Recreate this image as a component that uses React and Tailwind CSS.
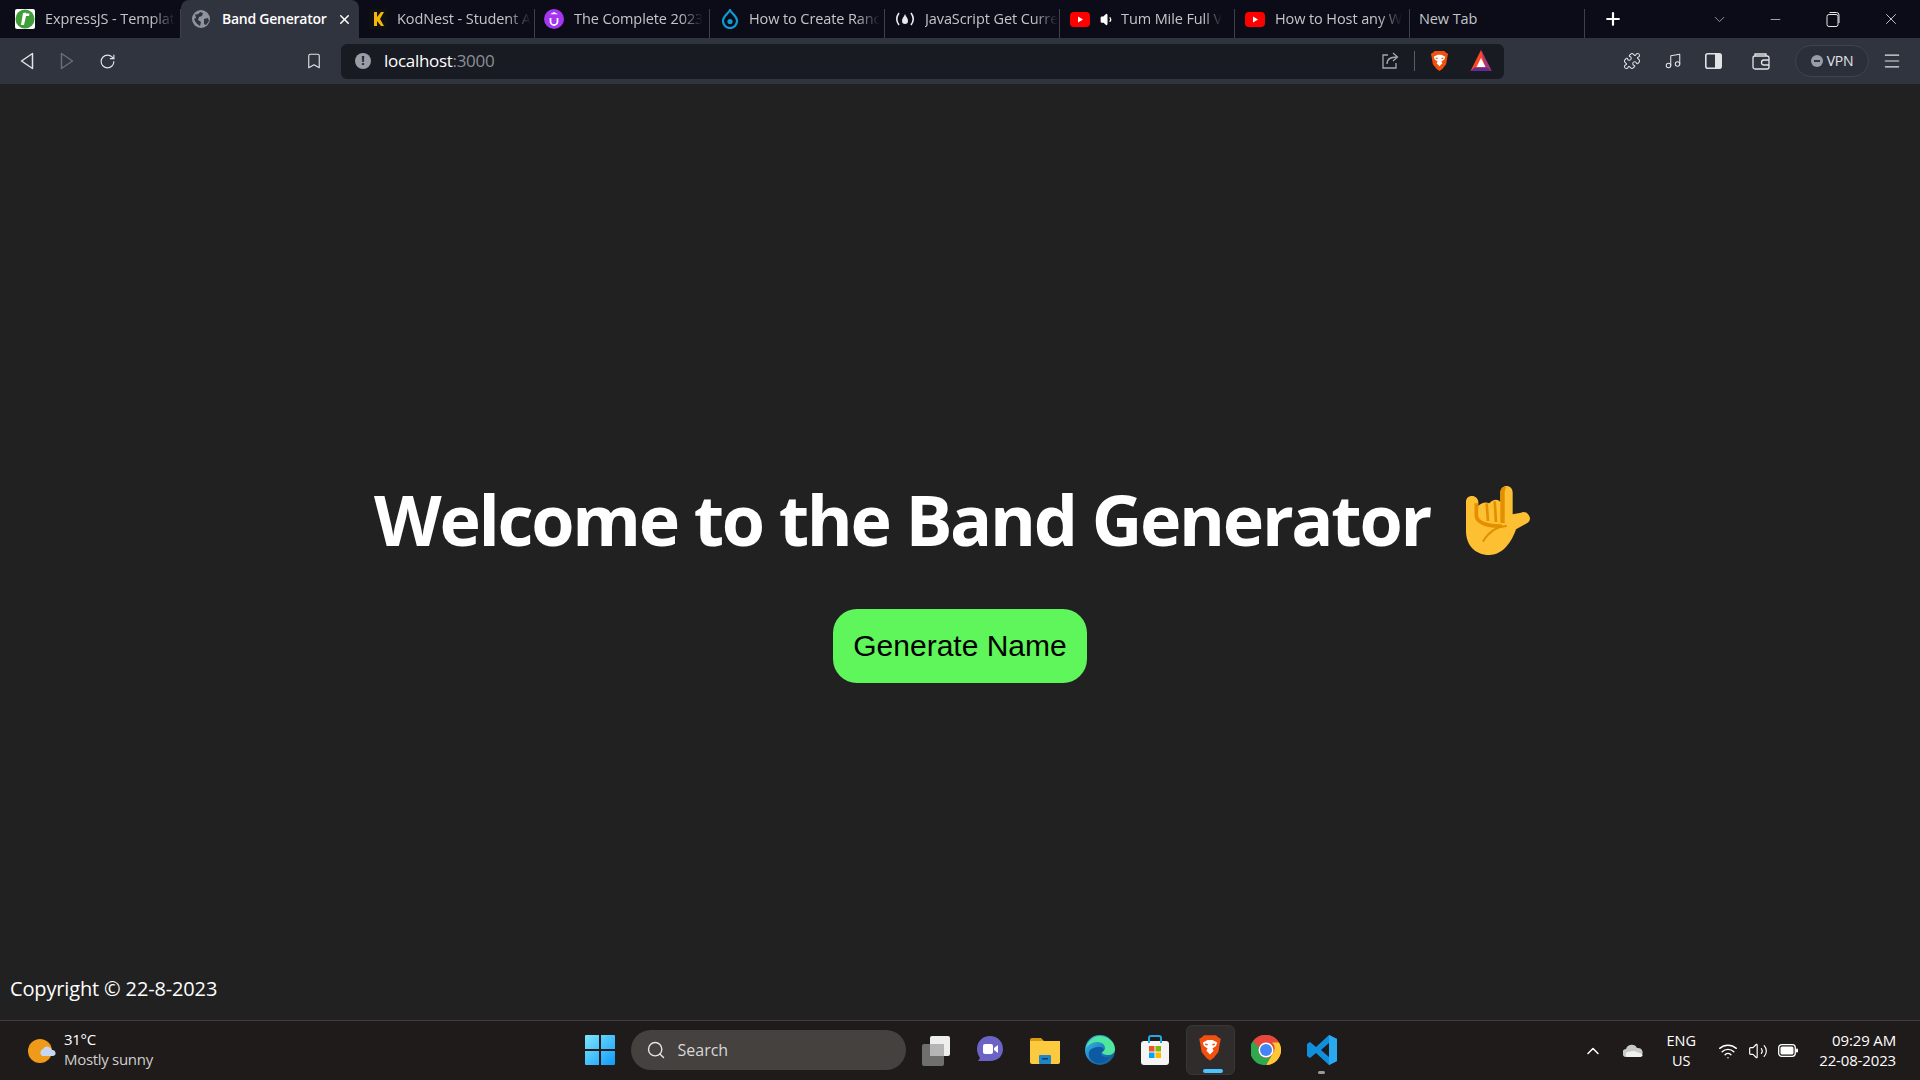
import React from "react";
import { Plus, ChevronDown, Minus, X, RotateCw, Bookmark, Puzzle, Music, Menu, ChevronUp, Search, Wifi, Volume2, Volume1 } from "lucide-react";

const ui = { fontFamily: '"Open Sans", "Noto Sans", sans-serif' };

const Green = () => (
  <svg width="20" height="20" viewBox="0 0 20 20"><rect width="20" height="20" rx="2" fill="#fff" /><circle cx="10" cy="10" r="9.5" fill="#3f9e3a" /><path d="M8 4l-2 12h3l2-9h3l.5-2.4H11l.2-1z" fill="#fff" /></svg>
);
const KodNest = () => (
  <svg width="18" height="20" viewBox="0 0 18 20"><rect width="18" height="20" fill="#111" /><path d="M5 3h3v5l4-5h3l-4 7 4 7h-3l-4-5v5H5z" fill="#f5b50a" /></svg>
);
const Udemy = () => (
  <svg width="20" height="20" viewBox="0 0 20 20"><circle cx="10" cy="10" r="10" fill="#a435f0" /><path d="M6.5 9v3.5a3.5 3.5 0 0 0 7 0V9" fill="none" stroke="#fff" strokeWidth="1.8" /><path d="M10 3l4 2.2H6z" fill="#fff" /></svg>
);
const Drupal = () => (
  <svg width="18" height="20" viewBox="0 0 18 20"><path d="M9 1c1 3 7 6 7 11a7 7 0 0 1-14 0C2 7 8 4 9 1z" fill="none" stroke="#0f9ad6" strokeWidth="2.2" /><circle cx="9" cy="12.5" r="2.6" fill="#0f9ad6" /></svg>
);
const FreeCodeCamp = () => (
  <svg width="20" height="20" viewBox="0 0 20 20" fill="none" stroke="#e8e8ee" strokeWidth="1.6"><path d="M4 4c-3 4-3 8 0 12M16 4c3 4 3 8 0 12" /><path d="M10 5c1 3 3 4 3 7a3 3 0 0 1-6 0c0-3 2-4 3-7z" fill="#e8e8ee" stroke="none" /></svg>
);
const YouTube = () => (
  <svg width="20" height="15" viewBox="0 0 20 15"><rect width="20" height="15" rx="4" fill="#f00" /><path d="M8 4.5l5 3-5 3z" fill="#fff" /></svg>
);
const Earth = () => (
  <svg width="18" height="18" viewBox="0 0 18 18"><circle cx="9" cy="9" r="9" fill="#8f939e" /><path d="M3 4c2 1 4 0 5-2l3 1-1 3-3 1-1 3 3 2-1 4C5 14 3 12 2 9l2-1zM12 9l4-1 1 3-3 4-2-1z" fill="#30343f" /></svg>
);
const BraveLion = ({ size = 20 }) => (
  <svg width={size} height={size * 1.15} viewBox="0 0 20 23"><path d="M5 1h10l2 2 2 1-1 5-1 6-4 5-3 2-3-2-4-5-1-6-1-5 2-1z" fill="#f1500f" /><path d="M6 6l2-1h4l2 1 2 1-1 3-3 2 1 2-3 3-3-3 1-2-3-2-1-3z" fill="#fff" /><path d="M8 9l-2-.5M12 9l2-.5" stroke="#f1500f" strokeWidth="1.2" /></svg>
);
const Bat = () => (
  <svg width="22" height="24" viewBox="0 0 22 24"><path d="M11 1l10.500 21H.5z" fill="#ff4724" /><path d="M11 1l10.500 21H16z" fill="#a03a7a" /><path d="M.5 22l4-3.500h13l4 3.500z" fill="#662d91" /><path d="M11 9l4.500 9h-9z" fill="#fff" /></svg>
);

const tabs = [
  { title: "ExpressJS - Templat", icon: <Green />, w: "w-[181px] pl-[15px]" },
  { title: "Band Generator", active: true, w: "w-[178px] pl-[11px]" },
  { title: "KodNest - Student A", icon: <KodNest />, w: "w-[176px] pl-[10px]" },
  { title: "The Complete 2023", icon: <Udemy />, w: "w-[175px] pl-[9px]" },
  { title: "How to Create Ranc", icon: <Drupal />, w: "w-[175px] pl-[11px]" },
  { title: "JavaScript Get Curre", icon: <FreeCodeCamp />, w: "w-[175px] pl-[10px]" },
  { title: "Tum Mile Full V", icon: <YouTube />, sound: true, w: "w-[175px] pl-[10px]" },
  { title: "How to Host any W", icon: <YouTube />, w: "w-[175px] pl-[10px]" },
  { title: "New Tab", plain: true, w: "w-[175px] pl-[9px]" },
];

function Tab({ tab }) {
  if (tab.active) {
    return (
      <div className={`${tab.w} flex items-center h-[38px] bg-[#30343f] rounded-t-lg text-white font-semibold text-[14px] shrink-0`}>
        <span className="flex mr-[12px]"><Earth /></span>
        <span className="w-[107px] mb-[1px] whitespace-nowrap tracking-[-0.25px]">{tab.title}</span>
        <X size={15} strokeWidth={2.4} className="ml-[8px]" />
      </div>
    );
  }
  return (
    <div className={`${tab.w} relative flex items-center h-[38px] text-[14.5px] text-[#c4c5ca] shrink-0`}>
      {tab.icon && <span className="flex items-center justify-center mr-[10px] shrink-0">{tab.icon}</span>}
      {tab.sound && <Volume1 size={15} className="mr-[6px] shrink-0 text-white fill-white" />}
      <span className={`mb-[1px] whitespace-nowrap tracking-[-0.1px] ${tab.plain ? "" : "[mask-image:linear-gradient(to_right,black_82%,transparent_100%)]"}`}>{tab.title}</span>
      <div className="absolute right-0 bottom-0 w-px h-[29px] bg-[#3d3f49]" />
    </div>
  );
}

function TitleBar() {
  return (
    <div className="h-[38px] bg-[#0b0c17] flex items-center">
      {tabs.map((t) => <Tab key={t.title} tab={t} />)}
      <Plus size={20} strokeWidth={2.6} className="text-white ml-[18px]" />
      <ChevronDown size={17} strokeWidth={1} className="text-[#c8c8cc] ml-[88px]" />
      <Minus size={15} strokeWidth={1} className="text-white ml-[40px]" />
      <svg width="14" height="16" viewBox="0 0 14 16" fill="none" stroke="#e8e8e8" className="ml-[43px]"><rect x="1" y="3.5" width="11" height="12" rx="2" /><path d="M3.5 1.5h7a2.5 2.5 0 0 1 2.5 2.5v8" /></svg>
      <X size={18} strokeWidth={1} className="text-white ml-[42px]" />
    </div>
  );
}

function Toolbar() {
  return (
    <div className="h-[46px] bg-[#30343f] flex items-center text-[#e2e3e6]">
      <svg width="14" height="18" viewBox="0 0 14 18" fill="none" stroke="currentColor" strokeWidth="1.5" strokeLinejoin="round" className="ml-[20px]"><path d="M12.5 1.5v15L1.5 9z" /></svg>
      <svg width="14" height="18" viewBox="0 0 14 18" fill="none" stroke="#6a6d77" strokeWidth="1.5" strokeLinejoin="round" className="ml-[26px]"><path d="M1.5 1.5v15l11-7.5z" /></svg>
      <RotateCw size={17} strokeWidth={1.6} className="ml-[25px]" />
      <Bookmark size={18} strokeWidth={1.5} className="ml-[189px]" />
      <div className="ml-[18px] w-[1163px] h-[35px] rounded-md bg-[#181b22] flex items-center">
        <span className="ml-[14px] w-[16px] h-[16px] rounded-full bg-[#9a9ca6] flex items-center justify-center text-[#181b22] text-[12px] font-bold leading-none">!</span>
        <span className="ml-[13px] w-[118px] text-[17px] text-white tracking-[-0.3px]">localhost<span className="text-[#8b8e97]">:3000</span></span>
        <svg width="18" height="18" viewBox="0 0 18 18" fill="none" stroke="#a5a7ae" strokeWidth="1.3" className="ml-[879px]"><path d="M7 3H2v13h13v-5" /><path d="M6 12c0-5 3-7 10-7M12 1l4.500 4-4.500 4" /></svg>
        <div className="ml-[15px] w-px h-[20px] bg-[#5a5c65]" />
        <span className="ml-[15px] flex"><BraveLion size={19} /></span>
        <span className="ml-[21px] flex"><Bat /></span>
      </div>
      <Puzzle size={18} strokeWidth={1.4} className="ml-[119px]" />
      <Music size={18} strokeWidth={1.4} className="ml-[23px]" />
      <svg width="17" height="16" viewBox="0 0 17 16" className="ml-[23px]"><rect x="0.8" y="0.8" width="15.400" height="14.400" rx="2" fill="none" stroke="#e2e3e6" strokeWidth="1.6" /><rect x="10" y="1" width="6" height="14" fill="#e2e3e6" /></svg>
      <svg width="18" height="17" viewBox="0 0 18 17" fill="none" stroke="#e2e3e6" strokeWidth="1.3" className="ml-[30px]"><rect x="1" y="3" width="16" height="13" rx="2" /><path d="M3 3V1h11v2M17 7h-5a2 2 0 0 0 0 5h5" /></svg>
      <div className="ml-[25px] w-[74px] h-[32px] rounded-full border border-[#3f4350] bg-[#2b2f3a] flex items-center justify-center text-[14px] gap-[4px]">
        <span className="w-[12px] h-[12px] rounded-full bg-[#9a9ca6] flex items-center justify-center"><span className="w-[6px] h-[2px] bg-[#30343f]" /></span>
        <span className="mb-[1px] tracking-[-0.3px]">VPN</span>
      </div>
      <Menu size={20} strokeWidth={1.4} className="ml-[13px]" />
    </div>
  );
}

function RockHand() {
  return (
    <svg width="64" height="69" viewBox="0 0 192 207" className="shrink-0">
      <path d="M0 48C0 36 8 30 18 30C28 30 37 38 37 48L37 60C45 50 60 46 70 52C80 40 95 38 103 48L103 20C103 8 112 0 121 0C132 0 140 8 140 20L140 85L165 80C178 74 190 84 192 97C192 105 188 110 180 113L150 130C140 160 115 207 70 207C25 207 0 175 0 135Z" fill="#fcc032" />
      <path d="M112 3C106 7 103 13 103 20L103 110L116 112L116 20C116 12 118 7 122 2Z" fill="#e38f00" />
      <path d="M31 52L31 90C33 108 60 122 108 120" fill="none" stroke="#e38f00" strokeWidth="11" />
      <path d="M62 52L66 105M86 46L90 108" fill="none" stroke="#e38f00" strokeWidth="8" />
      <path d="M120 120C95 122 70 135 52 165" fill="none" stroke="#e38f00" strokeWidth="6" strokeLinecap="round" />
    </svg>
  );
}

function Main() {
  return (
    <main className="flex-1 flex flex-col bg-[#212121] text-white">
      <div className="flex-1 flex flex-col items-center pt-[377px]">
        <div className="flex items-center pr-[16px] h-[115px]">
          <h1 className="text-[70px] font-bold leading-[96px] tracking-[-2.3px] whitespace-nowrap" style={ui}>Welcome to the Band Generator</h1>
          <span className="ml-[36px] mt-[3px] flex"><RockHand /></span>
        </div>
        <button className="mt-[33px] w-[254px] h-[74px] pb-[2px] rounded-3xl bg-[#5ef65b] text-black text-[30px]" style={{ fontFamily: '"Liberation Sans", Arial, sans-serif' }}>Generate Name</button>
      </div>
      <p className="pl-[10px] pb-[17px] text-[20px] leading-[28px] tracking-[-0.15px]" style={ui}>Copyright © 22-8-2023</p>
    </main>
  );
}

function Taskbar() {
  return (
    <div className="h-[60px] border-t border-[#3f3f3f] bg-[#1f1b1a] grid grid-cols-[1fr_auto_1fr] items-center text-white text-[14px]">
      <div className="flex items-center pl-[28px]">
        <svg width="28" height="26" viewBox="0 0 28 26"><circle cx="12" cy="13" r="12" fill="#f09a1a" /><path d="M14 18a4 4 0 0 1 1-7 5 5 0 0 1 9 1 3 3 0 0 1 1 6z" fill="#c9d6f2" /></svg>
        <div className="ml-[8px] mb-[4px] leading-[20px] text-[15px]">
          <div className="tracking-[-0.3px]">31°C</div>
          <div className="text-[#d0cfce] tracking-[-0.3px]">Mostly sunny</div>
        </div>
      </div>
      <div className="flex items-center h-full ml-[10px] pb-[2px]">
        <svg width="30" height="30" viewBox="0 0 30 30" className="mr-[16px]">
          <defs><linearGradient id="win" x1="0" y1="0" x2="1" y2="1"><stop offset="0" stopColor="#7fe6fb" /><stop offset="1" stopColor="#0f9bfb" /></linearGradient></defs>
          <path d="M0 1a1 1 0 0 1 1-1h13v14H0zM16 0h13a1 1 0 0 1 1 1v13H16zM0 16h14v14H1a1 1 0 0 1-1-1zM16 16h14v13a1 1 0 0 1-1 1H16z" fill="url(#win)" />
        </svg>
        <div className="w-[275px] h-[40px] rounded-full bg-[#45413f] flex items-center text-[#d8d7d6] text-[16px]">
          <Search size={20} strokeWidth={1.7} className="ml-[15px] mr-[12px] text-[#e4e4e4]" />
          <span>Search</span>
        </div>
        <svg width="32" height="32" viewBox="0 0 32 32" className="ml-[14px]"><rect x="10" y="2" width="20" height="20" rx="2" fill="#eeeeee" /><rect x="2" y="10" width="22" height="22" rx="2" fill="#6f6f6f" /><rect x="10" y="10" width="14" height="12" fill="#b5b5b5" /></svg>
        <svg width="30" height="30" viewBox="0 0 30 30" className="ml-[23px]"><path d="M15 1c8 0 13 6 13 13s-5 12-13 12H3l2-3C3 20 2 17 2 14 2 7 7 1 15 1z" fill="#6b64c4" /><rect x="8" y="9" width="10" height="10" rx="2" fill="#fff" /><path d="M19 13l4-3v8l-4-3z" fill="#fff" /></svg>
        <svg width="32" height="28" viewBox="0 0 32 28" className="ml-[24px]"><path d="M1 4a2 2 0 0 1 2-2h9l3 3h-14z" fill="#d69a13" /><path d="M1 5h30v21a2 2 0 0 1-2 2H3a2 2 0 0 1-2-2z" fill="#fbca3e" /><rect x="10" y="19" width="12" height="9" rx="1" fill="#1f85c9" /><rect x="13" y="22" width="6" height="1.500" fill="#0b3d68" /></svg>
        <svg width="30" height="30" viewBox="0 0 30 30" className="ml-[24px]">
          <defs><linearGradient id="edgeA" x1="0" y1="0" x2="1" y2="1"><stop offset="0" stopColor="#35c1f1" /><stop offset="1" stopColor="#114a8b" /></linearGradient></defs>
          <circle cx="15" cy="15" r="15" fill="url(#edgeA)" />
          <path d="M15 1c8 0 15 6 15 13 0 4-3 6-7 6-3 0-6-1-6-3 2-1 3-2 3-4 0-4-4-6-8-6-6 0-10 4-11 7C2 7 8 1 15 1z" fill="#50e6a0" />
          <path d="M15 12c4 0 5 4 2 5-3 2 2 7 7 5-3 5-8 7-13 6-6-2-8-7-7-11 1-3 5-5 11-5z" fill="#0c59a4" />
        </svg>
        <svg width="28" height="30" viewBox="0 0 28 30" className="ml-[26px]"><rect x="0" y="6" width="28" height="24" rx="3" fill="#f5f5f5" /><path d="M8 8V3a2 2 0 0 1 2-2h8a2 2 0 0 1 2 2v5" fill="none" stroke="#21a8e6" strokeWidth="2" /><rect x="8" y="11" width="5.500" height="5.500" fill="#f25022" /><rect x="14.500" y="11" width="5.500" height="5.500" fill="#7fba00" /><rect x="8" y="17.500" width="5.500" height="5.500" fill="#00a4ef" /><rect x="14.500" y="17.500" width="5.500" height="5.500" fill="#ffb900" /></svg>
        <div className="relative ml-[17px] w-[49px] h-[50px] rounded-md bg-[#302c2b] border border-[#3a3635] flex items-center justify-center">
          <span className="mb-[4px] flex"><BraveLion size={24} /></span>
          <div className="absolute bottom-[1px] left-[16px] w-[20px] h-[4px] rounded-full bg-[#4cc2ff]" />
        </div>
        <svg width="30" height="30" viewBox="0 0 30 30" className="ml-[16px]"><circle cx="15" cy="15" r="15" fill="#dd4b3e" /><path d="M15 0a15 15 0 0 1 13 7.500H15a7.500 7.500 0 0 0-7 5L2 6A15 15 0 0 1 15 0z" fill="#e8473c" /><path d="M28 7.500A15 15 0 0 1 15 30l7-12a7.500 7.500 0 0 0-1-10.500z" fill="#fcc934" /><path d="M2 6a15 15 0 0 0 13 24l7-12a7.500 7.500 0 0 1-14-5.500z" fill="#2fa84f" /><circle cx="15" cy="15" r="7.500" fill="#fff" /><circle cx="15" cy="15" r="6" fill="#4285f4" /></svg>
        <div className="relative ml-[25px] mr-[8px] flex">
          <svg width="32" height="32" viewBox="0 0 32 32"><path d="M23 1l8 4v22l-8 4-13-12-6 5-3-2V10l3-2 6 5zM23 9l-8 7 8 7z" fill="#0f8fdc" /><path d="M23 1l8 4v22l-8 4z" fill="#29a9f0" /></svg>
          <div className="absolute bottom-[-8px] left-[12px] w-[7px] h-[3px] rounded-full bg-[#9a9a9a]" />
        </div>
      </div>
      <div className="flex items-center justify-end pr-[24px]">
        <ChevronUp size={20} strokeWidth={1.8} />
        <svg width="20" height="13" viewBox="0 0 20 13" className="ml-[20px]"><path d="M4 13a4 4 0 0 1-1-8 6 6 0 0 1 11-1 4.500 4.500 0 0 1 2 9z" fill="#c9c9c9" /><path d="M4 13a3 3 0 0 1 0-5l7-1 8 3c1 1 1 3-3 3z" fill="#f0f0f0" /></svg>
        <div className="ml-[10px] w-[56px] text-center leading-[20px] text-[14.5px] tracking-[-0.1px]"><div>ENG</div><div>US</div></div>
        <Wifi size={20} strokeWidth={1.7} className="ml-[9px]" />
        <Volume2 size={20} strokeWidth={1.4} className="ml-[10px]" />
        <svg width="20" height="13" viewBox="0 0 20 13" className="ml-[10px]"><rect x="0.700" y="0.700" width="16.600" height="11.600" rx="3" fill="none" stroke="#fff" strokeWidth="1.300" /><rect x="2.500" y="2.500" width="13" height="8" rx="1.500" fill="#fff" /><rect x="18" y="4.500" width="2" height="4" rx="1" fill="#fff" /></svg>
        <div className="ml-[21px] mb-[2px] text-right leading-[20px] text-[15px] tracking-[-0.15px]"><div>09:29 AM</div><div>22-08-2023</div></div>
      </div>
    </div>
  );
}

export default function App() {
  return (
    <div className="w-[1920px] h-[1080px] flex flex-col overflow-hidden" style={ui}>
      <TitleBar />
      <Toolbar />
      <Main />
      <Taskbar />
    </div>
  );
}
